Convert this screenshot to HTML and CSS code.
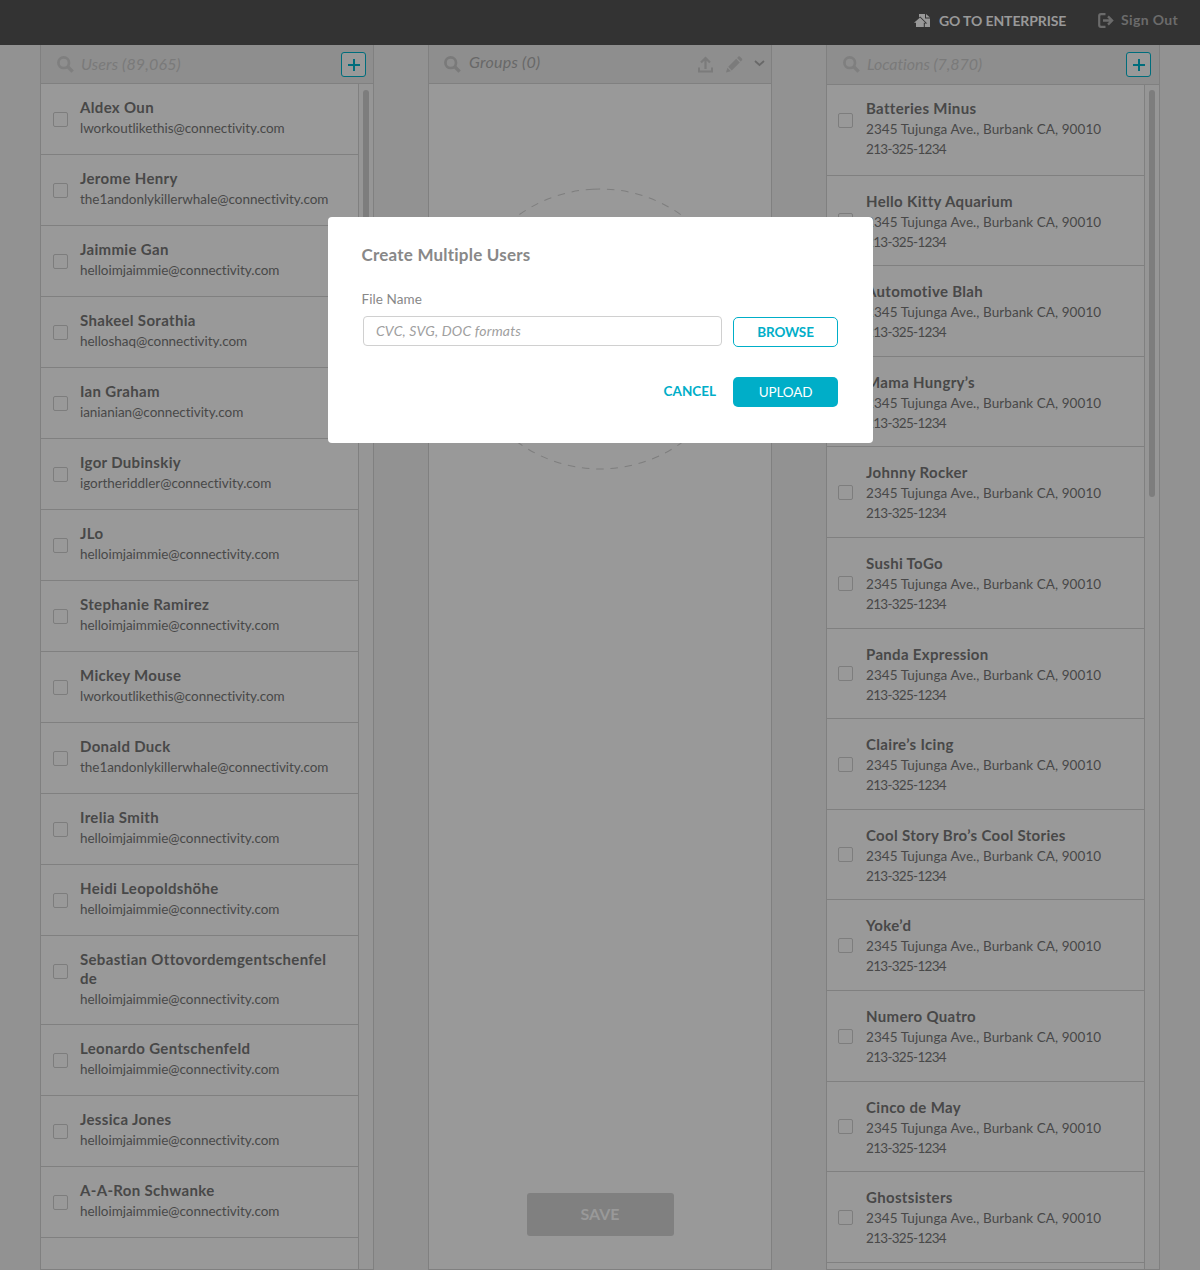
FILE: index.html
```
<!DOCTYPE html>
<html lang="en">
<head>
<meta charset="utf-8">
<title>Create Multiple Users</title>
<link rel="stylesheet" href="styles.css">
</head>
<body>
<svg class="sprite" width="0" height="0">
  <symbol id="search" viewBox="0 0 17 17"><circle cx="6.7" cy="6.7" r="5.3" fill="none" stroke="currentColor" stroke-width="2.7"/><path d="M10.8 10.8 15.6 15.6" stroke="currentColor" stroke-width="3.4"/></symbol>
  <symbol id="plus" viewBox="0 0 12 12"><path d="M6 0v12M0 6h12" stroke="currentColor" stroke-width="2"/></symbol>
</svg>
<header class="topbar">
  <a class="enterprise"><svg width="17" height="14" viewBox="0 0 17 14"><path fill="currentColor" d="M5 0H11V4.5H16V13H10.8V9.6H13.2L6.2 2.4 5 3.5Z"/><path fill="currentColor" d="M12 0 16 3.6H12Z"/><path fill="currentColor" d="M0 8.8 6 3.6 11.4 8.8H9.8V13H2V8.8Z"/></svg><span>GO TO ENTERPRISE</span></a>
  <a class="signout"><svg width="16" height="15" viewBox="0 0 16 15"><path d="M7.5 1.2H3Q1.2 1.2 1.2 3V12Q1.2 13.8 3 13.8H7.5" fill="none" stroke="currentColor" stroke-width="2.2"/><path d="M5 7.5H13.6M10 3.4 14.1 7.5 10 11.6" fill="none" stroke="currentColor" stroke-width="2.3"/></svg><span>Sign Out</span></a>
</header>
<main class="board">
  <section class="panel users">
    <div class="head"><svg class="search" width="17" height="17"><use href="#search"/></svg><span class="query">Users (89,065)</span><button class="add"><svg width="12" height="12"><use href="#plus"/></svg></button></div>
    <div class="body">
      <ul class="list">
        <li class="row"><i class="check"></i><div><b>Aldex Oun</b><p>lworkoutlikethis@connectivity.com</p></div></li>
        <li class="row"><i class="check"></i><div><b>Jerome Henry</b><p>the1andonlykillerwhale@connectivity.com</p></div></li>
        <li class="row"><i class="check"></i><div><b>Jaimmie Gan</b><p>helloimjaimmie@connectivity.com</p></div></li>
        <li class="row"><i class="check"></i><div><b>Shakeel Sorathia</b><p>helloshaq@connectivity.com</p></div></li>
        <li class="row"><i class="check"></i><div><b>Ian Graham</b><p>ianianian@connectivity.com</p></div></li>
        <li class="row"><i class="check"></i><div><b>Igor Dubinskiy</b><p>igortheriddler@connectivity.com</p></div></li>
        <li class="row"><i class="check"></i><div><b>JLo</b><p>helloimjaimmie@connectivity.com</p></div></li>
        <li class="row"><i class="check"></i><div><b>Stephanie Ramirez</b><p>helloimjaimmie@connectivity.com</p></div></li>
        <li class="row"><i class="check"></i><div><b>Mickey Mouse</b><p>lworkoutlikethis@connectivity.com</p></div></li>
        <li class="row"><i class="check"></i><div><b>Donald Duck</b><p>the1andonlykillerwhale@connectivity.com</p></div></li>
        <li class="row"><i class="check"></i><div><b>Irelia Smith</b><p>helloimjaimmie@connectivity.com</p></div></li>
        <li class="row"><i class="check"></i><div><b>Heidi Leopoldshöhe</b><p>helloimjaimmie@connectivity.com</p></div></li>
        <li class="row tall"><i class="check"></i><div><b>Sebastian Ottovordemgentschenfel<br>de</b><p>helloimjaimmie@connectivity.com</p></div></li>
        <li class="row"><i class="check"></i><div><b>Leonardo Gentschenfeld</b><p>helloimjaimmie@connectivity.com</p></div></li>
        <li class="row"><i class="check"></i><div><b>Jessica Jones</b><p>helloimjaimmie@connectivity.com</p></div></li>
        <li class="row"><i class="check"></i><div><b>A-A-Ron Schwanke</b><p>helloimjaimmie@connectivity.com</p></div></li>
      </ul>
      <div class="track"><div class="thumb"></div></div>
    </div>
  </section>
  <section class="panel groups">
    <div class="head"><svg class="search" width="17" height="17"><use href="#search"/></svg><span class="query">Groups (0)</span>
      <div class="tools">
        <svg width="15" height="17" viewBox="0 0 15 17"><path d="M7.5 13V3M3 6.6 7.5 2 12 6.6" fill="none" stroke="currentColor" stroke-width="2.2"/><path d="M1 11.5V15.5H14V11.5" fill="none" stroke="currentColor" stroke-width="2"/></svg>
        <svg width="17" height="17" viewBox="0 0 17 17"><path d="M0 16.5 1.4 11.8 4.8 15.2ZM2.2 10.8 10.2 2.8 13.8 6.4 5.7 14.5ZM11.1 2 12.4.6Q13.1 0 13.8.6L16 2.8Q16.6 3.5 16 4.2L14.6 5.5Z" fill="currentColor"/></svg>
        <svg class="chevron" width="11" height="7" viewBox="0 0 11 7"><path d="M1 1 5.5 5 10 1" fill="none" stroke="currentColor" stroke-width="1.7"/></svg>
      </div>
    </div>
    <div class="body canvas">
      <svg class="drop" width="282" height="282" viewBox="0 0 282 282"><circle cx="141" cy="141" r="140" fill="none" stroke="#7e7e7e" stroke-dasharray="7.5 6.8" transform="rotate(-93 141 141)"/></svg>
      <button class="save">SAVE</button>
    </div>
  </section>
  <section class="panel locations">
    <div class="head"><svg class="search" width="17" height="17"><use href="#search"/></svg><span class="query">Locations (7,870)</span><button class="add"><svg width="12" height="12"><use href="#plus"/></svg></button></div>
    <div class="body">
      <ul class="list">
        <li class="row"><i class="check"></i><div><b>Batteries Minus</b><p>2345 Tujunga Ave., Burbank CA, 90010</p><p class="phone">213-325-1234</p></div></li>
        <li class="row"><i class="check"></i><div><b>Hello Kitty Aquarium</b><p>2345 Tujunga Ave., Burbank CA, 90010</p><p class="phone">213-325-1234</p></div></li>
        <li class="row"><i class="check"></i><div><b>Automotive Blah</b><p>2345 Tujunga Ave., Burbank CA, 90010</p><p class="phone">213-325-1234</p></div></li>
        <li class="row"><i class="check"></i><div><b>Mama Hungry’s</b><p>2345 Tujunga Ave., Burbank CA, 90010</p><p class="phone">213-325-1234</p></div></li>
        <li class="row"><i class="check"></i><div><b>Johnny Rocker</b><p>2345 Tujunga Ave., Burbank CA, 90010</p><p class="phone">213-325-1234</p></div></li>
        <li class="row"><i class="check"></i><div><b>Sushi ToGo</b><p>2345 Tujunga Ave., Burbank CA, 90010</p><p class="phone">213-325-1234</p></div></li>
        <li class="row"><i class="check"></i><div><b>Panda Expression</b><p>2345 Tujunga Ave., Burbank CA, 90010</p><p class="phone">213-325-1234</p></div></li>
        <li class="row"><i class="check"></i><div><b>Claire’s Icing</b><p>2345 Tujunga Ave., Burbank CA, 90010</p><p class="phone">213-325-1234</p></div></li>
        <li class="row"><i class="check"></i><div><b>Cool Story Bro’s Cool Stories</b><p>2345 Tujunga Ave., Burbank CA, 90010</p><p class="phone">213-325-1234</p></div></li>
        <li class="row"><i class="check"></i><div><b>Yoke’d</b><p>2345 Tujunga Ave., Burbank CA, 90010</p><p class="phone">213-325-1234</p></div></li>
        <li class="row"><i class="check"></i><div><b>Numero Quatro</b><p>2345 Tujunga Ave., Burbank CA, 90010</p><p class="phone">213-325-1234</p></div></li>
        <li class="row"><i class="check"></i><div><b>Cinco de May</b><p>2345 Tujunga Ave., Burbank CA, 90010</p><p class="phone">213-325-1234</p></div></li>
        <li class="row"><i class="check"></i><div><b>Ghostsisters</b><p>2345 Tujunga Ave., Burbank CA, 90010</p><p class="phone">213-325-1234</p></div></li>
      </ul>
      <div class="track"><div class="thumb"></div></div>
    </div>
  </section>
</main>
<div class="modal" role="dialog">
  <h2>Create Multiple Users</h2>
  <label>File Name</label>
  <div class="field"><div class="input">CVC, SVG, DOC formats</div><button class="btn browse">BROWSE</button></div>
  <div class="actions"><a class="cancel">CANCEL</a><button class="btn upload">UPLOAD</button></div>
</div>
</body>
</html>
```

FILE: styles.css
```
* { box-sizing: border-box; }
body { margin: 0; height: 1270px; overflow: hidden; background: #929292; font-family: Lato, "Open Sans", sans-serif; font-size: 14px; color: #484848; position: relative; }
button { font: inherit; padding: 0; margin: 0; border: 0; }
ul, p, h2 { margin: 0; padding: 0; list-style: none; font-weight: 400; }
svg { display: block; flex: none; }
.sprite { position: absolute; }

.topbar { height: 45px; background: #333; display: flex; justify-content: flex-end; padding-right: 21px; }
.topbar a { display: flex; line-height: 20px; white-space: nowrap; font-weight: 700; }
.enterprise { color: #999; width: 152px; gap: 7px; padding-top: 11px; margin-right: 30px; font-size: 14px; letter-spacing: -.12px; }
.enterprise svg { margin: 3px 1px 0 -1px; }
.signout { color: #6b6b6b; width: 82px; gap: 8px; padding-top: 10px; font-size: 14px; letter-spacing: .35px; }
.signout svg { margin: 3px -1px 0 1px; }

.board { height: 1225px; display: flex; justify-content: space-between; padding: 0 40px; }
.panel { width: 334px; display: flex; flex-direction: column; background: #999; border: 1px solid #808080; border-top: 0; }
.groups { width: 344px; }
.head { height: 39px; flex: none; display: flex; align-items: flex-start; background: #8e8e8e; border-bottom: 1px solid #808080; padding: 7px 7px 0 16px; }
.locations .head { height: 40px; padding-right: 8px; }
.groups .head { padding-left: 15px; padding-right: 6px; }
.search { margin-top: 4px; color: #7f7f7f; }
.query { flex: 1; margin: 2px 0 0 7px; line-height: 20px; font-size: 16px; letter-spacing: .15px; font-style: italic; color: #7a7a7a; white-space: nowrap; }
.locations .query { letter-spacing: -.05px; }
.groups .query { margin: 0 0 0 8px; letter-spacing: .25px; color: #686868; }
.groups .search { color: #7a7a7a; }
.add { width: 25px; height: 25px; border: 1px solid #006d7c; border-radius: 3px; background: #999; color: #006d7c; display: flex; align-items: flex-start; padding: 6px 0 0 6px; }
.tools { display: flex; color: #7b7b7b; padding-top: 4px; }
.tools svg:nth-child(2) { margin-left: 13px; }
.tools .chevron { margin: 4px 0 0 11px; color: #686868; }

.body { flex: 1; display: flex; min-height: 0; }
.list { flex: 1; }
.track { width: 15px; flex: none; border-left: 1px solid #808080; padding: 6px 0 0 4px; background: #969696; }
.thumb { width: 6px; height: 300px; border-radius: 3px; background: #7d7d7d; }
.locations .track { padding-top: 5px; }
.locations .thumb { height: 407px; }
.row { height: 71px; display: flex; border-bottom: 1px solid #808080; padding: 14px 0 0 12px; line-height: 20px; white-space: nowrap; }
.row div { margin: -1px 0 0 12px; }
.row b { display: block; font-size: 15px; line-height: 20px; margin-bottom: 1px; font-weight: 700; letter-spacing: .33px; }
.row p { font-size: 13.5px; letter-spacing: -.04px; }
.row.tall { height: 89px; }
.row.tall div { margin-top: 0; }
.row.tall b { line-height: 19px; margin-bottom: 1px; }
.check { width: 15px; height: 15px; flex: none; margin-top: 14px; border: 1px solid #7d7d7d; border-radius: 2px; }
.locations .row { height: 90.6px; padding: 16px 0 0 11px; }
.locations .row div { margin-left: 13px; }
.locations .row p { letter-spacing: .07px; }
.locations .row .phone { letter-spacing: -.7px; }
.locations .check { margin-top: 21.6px; }
.locations .row:first-child { padding-top: 14px; }
.locations .row:first-child .check { margin-top: 14px; }

.canvas { flex-direction: column; align-items: center; justify-content: space-between; padding: 104px 0 33px; }
.save { width: 147px; height: 43px; border-radius: 3px; background: #808080; color: #999; font-size: 16px; font-weight: 700; padding-bottom: 2px; }

.modal { position: absolute; left: 328px; top: 217px; width: 545px; height: 226px; padding: 27px 35px 0 33.5px; background: #fff; border-radius: 4px; color: #888; display: flex; flex-direction: column; }
.modal h2 { font-size: 17px; line-height: 22px; font-weight: 700; letter-spacing: .22px; }
.modal label { line-height: 20px; margin-top: 23px; font-size: 13.5px; letter-spacing: .08px; }
.field { display: flex; margin-top: 7px; padding-left: 1.5px; gap: 11px; }
.input { width: 359px; height: 30px; border: 1px solid #d0d0d0; border-radius: 4px; padding-left: 12px; line-height: 28px; font-style: italic; color: #a0a0a0; font-size: 14px; letter-spacing: .18px; }
.btn { width: 105px; height: 30px; border-radius: 5px; font-size: 13.5px; line-height: 28px; margin-top: 1px; letter-spacing: -.15px; }
.browse { border: 1px solid #00aec8; background: #fff; color: #00aec8; font-weight: 700; }
.upload { background: #00aec8; color: #fff; margin-top: 0; padding-bottom: 1px; }
.actions { display: flex; justify-content: flex-end; margin-top: 30px; gap: 17px; }
.cancel { color: #00aec8; font-weight: 700; font-size: 13.5px; line-height: 28px; }
```
